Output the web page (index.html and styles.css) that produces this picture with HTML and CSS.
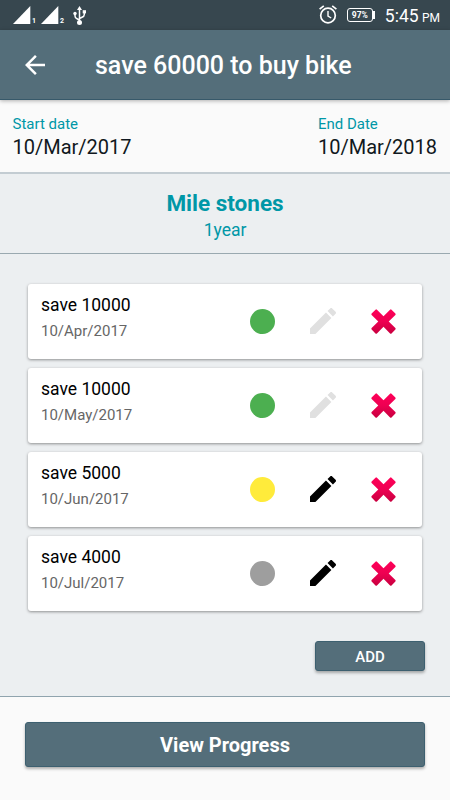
FILE: index.html
```html
<!DOCTYPE html>
<html lang="en">
<head>
    <meta charset="UTF-8">
    <title>save 60000 to buy bike</title>
    <link rel="stylesheet" href="styles.css">
</head>
<body>

<!-- shared icons -->
<svg class="defs" width="0" height="0">
    <defs>
        <linearGradient id="red" x1="0" y1="0" x2="0" y2="1">
            <stop offset="0" stop-color="#ff0058"/>
            <stop offset="0.5" stop-color="#ee0052"/>
            <stop offset="1" stop-color="#c8003f"/>
        </linearGradient>
        <symbol id="pencil" viewBox="3 3 18 18">
            <path d="M3 17.25V21h3.75L17.81 9.94l-3.75-3.75L3 17.25zM20.71 7.04c.39-.39.39-1.02 0-1.41l-2.34-2.34c-.39-.39-1.02-.39-1.41 0l-1.83 1.83 3.75 3.75 1.83-1.83z"/>
        </symbol>
        <symbol id="cross" viewBox="0 0 24 24">
            <path fill="url(#red)" d="M4.3.6Q5 0 5.7.6L12 7 18.3.6Q19 0 19.7.6L23.4 4.3Q24 5 23.4 5.7L17 12 23.4 18.3Q24 19 23.4 19.7L19.7 23.4Q19 24 18.3 23.4L12 17 5.7 23.4Q5 24 4.3 23.4L.6 19.7Q0 19 .6 18.3L7 12 .6 5.7Q0 5 .6 4.3Z"/>
        </symbol>
    </defs>
</svg>

<div class="status-bar">
    <div class="status-left">
        <svg class="signal" width="19" height="19" viewBox="0 0 19 19"><path d="M0 18L17.3 0V18Z"/></svg>
        <span class="sim">1</span>
        <svg class="signal" width="19" height="19" viewBox="0 0 19 19"><path d="M0 18L17.3 0V18Z"/></svg>
        <span class="sim">2</span>
        <svg class="usb" width="13" height="20" viewBox="0 0 13 20">
            <path d="M6.5 3V17M2 8V10Q2 12 4 12.8L6.5 14M11.3 6V8.5Q11.3 10.3 9 11.3L6.5 12.5" fill="none" stroke="#fff" stroke-width="1.5"/>
            <path d="M6.5 0L9 4H4Z"/>
            <circle cx="2" cy="7.5" r="1.7"/>
            <path d="M9.7 4.2H13V7.4H9.7Z"/>
            <circle cx="6.5" cy="16.5" r="2.5"/>
        </svg>
    </div>
    <div class="status-right">
        <svg class="alarm" width="18" height="19" viewBox="0 0 18 19" fill="none" stroke="#fff">
            <circle cx="9" cy="10.5" r="7.3" stroke-width="1.7"/>
            <path d="M9 6V11L12.2 13" stroke-width="1.4"/>
            <path d="M0.6 4.2L4.8 0.8M17.4 4.2L13.2 0.8" stroke-width="1.7"/>
        </svg>
        <div class="battery">97%</div>
        <div class="clock">5:45 <small>PM</small></div>
    </div>
</div>

<header>
    <svg class="back" width="20" height="20" viewBox="4 4 16 16"><path d="M20 11H7.83l5.59-5.59L12 4l-8 8 8 8 1.41-1.41L7.83 13H20v-2z"/></svg>
    <h1>save 60000 to buy bike</h1>
</header>

<div class="dates">
    <div>
        <div class="date-label">Start date</div>
        <div class="date-value">10/Mar/2017</div>
    </div>
    <div>
        <div class="date-label">End Date</div>
        <div class="date-value">10/Mar/2018</div>
    </div>
</div>

<div class="heading">
    <h2>Mile stones</h2>
    <div class="duration">1year</div>
</div>

<div class="milestones">
    <div class="card">
        <div class="card-text">
            <div class="card-title">save 10000</div>
            <div class="card-date">10/Apr/2017</div>
        </div>
        <div class="dot green"></div>
        <svg class="edit disabled"><use href="#pencil"/></svg>
        <svg class="delete"><use href="#cross"/></svg>
    </div>
    <div class="card">
        <div class="card-text">
            <div class="card-title">save 10000</div>
            <div class="card-date">10/May/2017</div>
        </div>
        <div class="dot green"></div>
        <svg class="edit disabled"><use href="#pencil"/></svg>
        <svg class="delete"><use href="#cross"/></svg>
    </div>
    <div class="card">
        <div class="card-text">
            <div class="card-title">save 5000</div>
            <div class="card-date">10/Jun/2017</div>
        </div>
        <div class="dot yellow"></div>
        <svg class="edit"><use href="#pencil"/></svg>
        <svg class="delete"><use href="#cross"/></svg>
    </div>
    <div class="card">
        <div class="card-text">
            <div class="card-title">save 4000</div>
            <div class="card-date">10/Jul/2017</div>
        </div>
        <div class="dot grey"></div>
        <svg class="edit"><use href="#pencil"/></svg>
        <svg class="delete"><use href="#cross"/></svg>
    </div>
    <button class="add-btn">ADD</button>
</div>

<div class="footer">
    <button class="progress-btn">View Progress</button>
</div>

</body>
</html>
```
FILE: styles.css
```css
* {
    box-sizing: border-box;
}
body {
    font-family: Roboto, sans-serif;
    background: #fafafa;
    margin: 0;
    height: 800px;
    display: flex;
    flex-direction: column;
    overflow: hidden;
}
.defs {
    flex: none;
}
.status-bar {
    height: 30px;
    background: #37474f;
    color: white;
    display: flex;
    justify-content: space-between;
    padding: 0 10px 0 13px;
}
.status-left {
    display: flex;
    padding-top: 6px;
}
.status-left svg {
    fill: white;
}
.sim {
    width: 9px;
    font-size: 7px;
    font-weight: bold;
    line-height: 8px;
    padding-top: 11px;
}
.usb {
    margin-left: 4px;
}
.status-right {
    display: flex;
}
.alarm {
    margin-top: 5px;
}
.battery {
    position: relative;
    width: 26px;
    height: 14px;
    margin: 8px 12px 0 10px;
    border: 1px solid white;
    border-radius: 3px;
    font-size: 8.5px;
    font-weight: bold;
    line-height: 13px;
    text-align: center;
}
.battery::after {
    content: "";
    position: absolute;
    right: -3px;
    top: 2px;
    width: 2px;
    height: 8px;
    background: white;
}
.clock {
    font-size: 17.5px;
    line-height: 32px;
    white-space: nowrap;
}
.clock small {
    font-size: 12px;
    margin-left: -1px;
}
header {
    height: 70px;
    background: #546e7a;
    border-bottom: 1px solid #37596a;
    box-shadow: 0 1px 4px rgba(0, 0, 0, 0.3);
    color: white;
    display: flex;
    align-items: center;
    padding-left: 25px;
    z-index: 1;
}
.back {
    fill: white;
}
h1 {
    margin: 2px 0 0 50px;
    font-size: 25px;
    font-weight: 500;
}
.dates {
    height: 74px;
    border-bottom: 2px solid #c3ccd2;
    display: flex;
    justify-content: space-between;
    padding: 15px 13px 0 12.5px;
}
.date-label {
    color: #0097a7;
    font-size: 15px;
    line-height: 18px;
}
.date-value {
    color: #101820;
    font-size: 20px;
    line-height: 29px;
}
.heading {
    height: 80px;
    background: #eceff1;
    border-bottom: 1px solid #9aa9b0;
    color: #0097a7;
    text-align: center;
    padding-top: 15px;
}
h2 {
    margin: 0;
    font-size: 22.5px;
    line-height: 28px;
}
.duration {
    font-size: 17.5px;
    line-height: 26px;
}
.milestones {
    height: 443px;
    background: #eceff1;
    border-bottom: 1px solid #90a4ae;
    padding: 30px 28px 0;
    display: flex;
    flex-direction: column;
}
.card {
    height: 75px;
    margin-bottom: 9px;
    background: white;
    border-radius: 3px;
    box-shadow: 0 1px 3px rgba(0, 0, 0, 0.4);
    display: flex;
    align-items: center;
    padding: 0 26px 0 13px;
}
.card-text {
    flex: 1;
    align-self: flex-start;
    padding-top: 9px;
}
.card-title {
    color: black;
    font-size: 17.5px;
    line-height: 24px;
}
.card-date {
    color: #666;
    font-size: 15px;
    line-height: 20px;
    margin-top: 4px;
}
.dot {
    width: 25px;
    height: 25px;
    border-radius: 50%;
}
.green {
    background: #4caf50;
}
.yellow {
    background: #ffeb3b;
}
.grey {
    background: #9e9e9e;
}
.edit {
    width: 26px;
    height: 26px;
    margin: 0 35px 1px;
}
.disabled {
    fill: #e0e0e0;
}
.delete {
    width: 25px;
    height: 25px;
}
button {
    border: 1px solid #3d6070;
    border-radius: 3px;
    background: #546e7a;
    color: white;
    font-family: Roboto, sans-serif;
    padding: 0;
    box-shadow: 0 2px 3px rgba(0, 0, 0, 0.3);
}
.add-btn {
    width: 110px;
    height: 30px;
    align-self: flex-end;
    margin: 21px -3px 0 0;
    font-size: 15px;
    font-weight: 500;
    padding-top: 1px;
}
.footer {
    padding: 25px 25px 0;
}
.progress-btn {
    width: 100%;
    height: 45px;
    font-size: 20px;
    font-weight: bold;
}
```
